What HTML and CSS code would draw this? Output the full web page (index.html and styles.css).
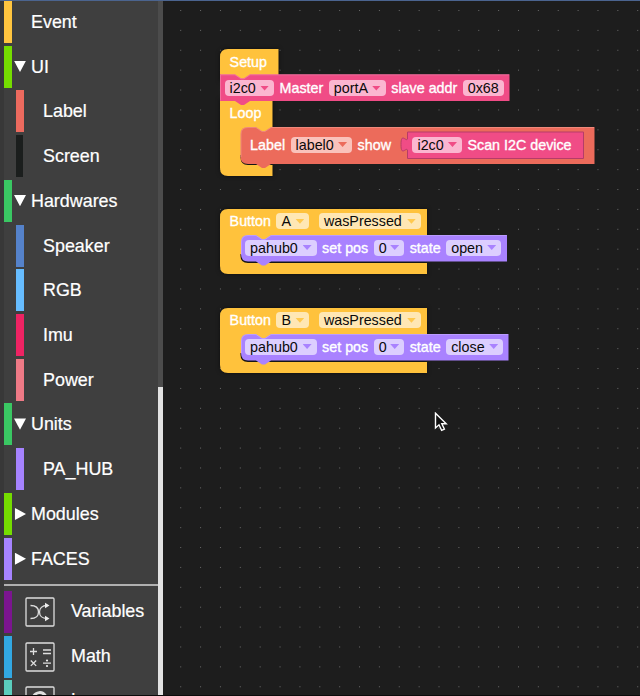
FILE: index.html
```
<!DOCTYPE html>
<html lang="en">
<head>
<meta charset="utf-8">
<title>Block editor</title>
<link rel="stylesheet" href="styles.css">
</head>
<body>
<div class="app">
  <aside class="toolbox">
    <nav class="tree">
      <div class="row"><i class="bar gold"></i><span class="name">Event</span></div>
      <div class="row"><i class="bar lime"></i><i class="arrow down"></i><span class="name">UI</span></div>
      <div class="row nested"><i class="bar coral"></i><span class="name">Label</span></div>
      <div class="row nested"><i class="bar black"></i><span class="name">Screen</span></div>
      <div class="row"><i class="bar green"></i><i class="arrow down"></i><span class="name">Hardwares</span></div>
      <div class="row nested"><i class="bar blue"></i><span class="name">Speaker</span></div>
      <div class="row nested"><i class="bar sky"></i><span class="name">RGB</span></div>
      <div class="row nested"><i class="bar crimson"></i><span class="name">Imu</span></div>
      <div class="row nested"><i class="bar rose"></i><span class="name">Power</span></div>
      <div class="row"><i class="bar green"></i><i class="arrow down"></i><span class="name">Units</span></div>
      <div class="row nested"><i class="bar violet"></i><span class="name">PA_HUB</span></div>
      <div class="row"><i class="bar lime"></i><i class="arrow right"></i><span class="name">Modules</span></div>
      <div class="row"><i class="bar violet"></i><i class="arrow right"></i><span class="name">FACES</span></div>
      <div class="separator"></div>
      <div class="row with-icon"><i class="bar purple"></i>
        <svg class="icon" viewBox="0 0 30 30"><rect x="1" y="1" width="28" height="28" rx="1"/><path d="M5.500 8.500C11 8.500 13.500 11.500 13.500 15S11 21.500 5.500 21.500M22 8.500C17 8.500 14.500 11.500 14.500 15S17 21.500 22 21.500"/><path class="solid" d="M20 5.800 24.500 8.500 20 11.200zM20 18.800l4.500 2.700-4.500 2.700z"/></svg>
        <span class="name">Variables</span></div>
      <div class="row with-icon"><i class="bar azure"></i>
        <svg class="icon" viewBox="0 0 30 30"><rect x="1" y="1" width="28" height="28" rx="1"/><path d="M5 9.500h7M8.500 6v7M18 8h8M18 11.500h8M5.800 18.500l5.400 5.400M11.200 18.500l-5.400 5.400M18 21.200h8"/><circle class="solid" cx="22" cy="18.500" r="1.100"/><circle class="solid" cx="22" cy="24" r="1.100"/></svg>
        <span class="name">Math</span></div>
      <div class="row with-icon"><i class="bar teal"></i>
        <svg class="icon" viewBox="0 0 30 30"><rect x="1" y="1" width="28" height="28" rx="1"/><path class="loop" d="M8 12C10 5.500 18 4.500 21 11"/><path class="solid" d="M14 10l9-1-2 8z"/></svg>
        <span class="name">Loops</span></div>
    </nav>
    <div class="scroll"><div class="thumb"></div></div>
  </aside>
  <main class="canvas">
    <svg class="dots"><defs><pattern id="dot" x="17.200" y="10" width="19.870" height="19.890" patternUnits="userSpaceOnUse"><rect width="1" height="1" fill="#696969"/></pattern></defs><rect width="100%" height="100%" fill="url(#dot)"/></svg>

    <section class="stack first">
      <svg class="shape" width="380" height="132">
        <path class="yellow" d="M0 32V8Q0 0 8 0H58.500V32z"/>
        <path class="yellow" d="M0 50.500H52.500V106H20.500V108Q20.500 116 28 116H52.500V127H8Q0 127 0 119z"/>
        <path class="pink" d="M0 25.300H15l6 4h3l6-4H289.500V52H30l-6 4h-3l-6-4H0z"/>
        <path class="edge" d="M.5 51.500V25.800H15l6 4h3l6-4H289"/>
        <path class="red" d="M20.500 85Q20.500 78 28 78H36l6 4h3l6-4H374.500V115H51l-6 4h-3l-6-4H28Q20.500 115 20.500 108z"/>
        <path class="edge" d="M21 108V85Q21 78.500 28 78.500H36l6 4h3l6-4H374"/>
        <path class="pink inset" d="M187.500 83H363.500V109.500H187.500V101C186 98 181 108 181 95.500S186 93 187.500 90z"/>
      </svg>
      <div class="line setup"><span class="word">Setup</span></div>
      <div class="line tight"><span class="pill p-pink w49">i2c0<i class="caret"></i></span><span class="word">Master</span><span class="pill p-pink w57">portA<i class="caret"></i></span><span class="word">slave addr</span><span class="pill p-pink w41">0x68</span></div>
      <div class="line loop-line"><span class="word">Loop</span></div>
      <div class="line inner tall"><span class="word">Label</span><span class="pill p-red w61">label0<i class="caret"></i></span><span class="word">show</span><span class="pill p-pink w49 value">i2c0<i class="caret"></i></span><span class="word">Scan I2C device</span></div>
    </section>

    <section class="stack second">
      <svg class="shape" width="300" height="72">
        <path class="yellow" d="M8 0H207V32H52V45H20.500V47Q20.500 54 28 54H207V65H8Q0 65 0 57V8Q0 0 8 0z"/>
        <path class="lilac" d="M21 33Q21 26 28 26H36l6 4h3l6-4H287V52.500H51l-6 4h-3l-6-4H28Q21 52.500 21 45z"/>
        <path class="edge" d="M21.500 45V33Q21.500 26.500 28 26.500H36l6 4h3l6-4H286.500"/>
      </svg>
      <div class="line"><span class="word">Button</span><span class="pill p-yellow w33">A<i class="caret"></i></span><span class="pill p-yellow w102 event">wasPressed<i class="caret"></i></span></div>
      <div class="line inner body"><span class="pill p-lilac w72">pahub0<i class="caret"></i></span><span class="word">set pos</span><span class="pill p-lilac w30">0<i class="caret"></i></span><span class="word">state</span><span class="pill p-lilac w55">open<i class="caret"></i></span></div>
    </section>

    <section class="stack third">
      <svg class="shape" width="300" height="72">
        <path class="yellow" d="M8 0H207V32H52V45H20.500V47Q20.500 54 28 54H207V65H8Q0 65 0 57V8Q0 0 8 0z"/>
        <path class="lilac" d="M21 33Q21 26 28 26H36l6 4h3l6-4H288.500V52.500H51l-6 4h-3l-6-4H28Q21 52.500 21 45z"/>
        <path class="edge" d="M21.500 45V33Q21.500 26.500 28 26.500H36l6 4h3l6-4H288"/>
      </svg>
      <div class="line"><span class="word">Button</span><span class="pill p-yellow w33">B<i class="caret"></i></span><span class="pill p-yellow w102 event">wasPressed<i class="caret"></i></span></div>
      <div class="line inner body"><span class="pill p-lilac w72">pahub0<i class="caret"></i></span><span class="word">set pos</span><span class="pill p-lilac w30">0<i class="caret"></i></span><span class="word">state</span><span class="pill p-lilac w57">close<i class="caret"></i></span></div>
    </section>

    <svg class="cursor" viewBox="0 0 14 20"><path d="M1.500 1.200V16L5 12.800l2.600 5.600 2.800-1.300-2.600-5.300h4.400z"/></svg>
  </main>
</div>
</body>
</html>
```
FILE: styles.css
```
* { box-sizing: border-box; }
body { margin: 0; background: #1d1d1d; font-family: "Liberation Sans", Arial, sans-serif; }
.app { display: flex; width: 640px; height: 696px; overflow: hidden; border-top: 1px solid #4b648f; border-bottom: 1px solid #0b0b0b; }

.toolbox { display: flex; width: 163px; background: #3f3f3f; }
.tree { width: 158px; height: 694px; overflow: hidden; padding-left: 4px; background: linear-gradient(90deg, #383838 4px, #3f3f3f 4px); }
.row { display: flex; height: 44.720px; }
.bar { width: 8px; height: 42px; flex: none; }
.nested { padding-left: 12px; }
.name { margin-left: 19px; height: 42px; line-height: 43px; font-size: 17.900px; color: #fff; -webkit-text-stroke: .2px #fff; white-space: nowrap; }
.arrow { width: 12px; height: 12px; margin: 15px -14px 0 2px; background: #fff; flex: none; }
.down { clip-path: polygon(0 0, 100% 0, 50% 95%); }
.right { clip-path: polygon(8% 0, 100% 50%, 8% 100%); }
.gold { background: #ffc53f; }
.lime { background: #75dd00; }
.coral { background: #ec6a5e; }
.black { background: #1b1e1d; width: 7px; margin-right: 1px; }
.green { background: #3ac763; }
.blue { background: #5582ca; }
.sky { background: #66bcff; }
.crimson { background: #ee2363; }
.rose { background: #ee7a86; }
.violet { background: #a683ff; }
.purple { background: #7b158f; }
.azure { background: #32a8e2; }
.teal { background: #5bcdbd; }
.separator { height: 2px; margin: 1.700px 0 5px; background: #b0b0b0; }
.icon { width: 30px; height: 30px; margin: 6px 0 0 13px; flex: none; fill: none; stroke: #dedede; stroke-width: 1.3; }
.icon .solid { fill: #eee; stroke: none; }
.icon .loop { stroke-width: 3; }
.with-icon .name { margin-left: 16px; line-height: 41.500px; }
.scroll { width: 5px; background: #4c4c4c; padding-top: 386px; }
.thumb { height: 310px; background: #e2e2e2; }

.canvas { position: relative; flex: 1; background: #1d1d1d; }
.dots { display: block; width: 100%; height: 100%; margin-top: -1px; }
.stack { position: absolute; left: 56.600px; font-size: 14.300px; color: #fff; }
.first { top: 48px; }
.second { top: 207.500px; }
.third { top: 306.500px; }
.shape { position: absolute; left: 0; top: 0; overflow: visible; }
.yellow { fill: #ffc23c; filter: drop-shadow(0 0 2px #0008); }
.pink { fill: #f04c86; }
.red { fill: #ec6b5b; }
.lilac { fill: #a982ff; }
.edge { fill: none; stroke: #fff; stroke-opacity: .2; }
.inset { stroke: #b63c68; stroke-width: 1; }
.line { position: relative; display: flex; align-items: center; gap: 5.500px; height: 25.500px; padding-left: 10px; white-space: nowrap; }
.word { -webkit-text-stroke: .35px #fff; }
.setup { height: 26px; }
.tight { height: 26px; padding-left: 5px; }
.loop-line { height: 24.500px; }
.inner { margin-left: 20.500px; padding-left: 10px; }
.tall { height: 38px; }
.body { height: 27px; padding-left: 5px; }
.pill { display: flex; align-items: center; justify-content: space-between; height: 16px; padding: 0 5px; border-radius: 4px; color: #0a0a0a; }
.caret { width: 9px; height: 5px; clip-path: polygon(0 0, 100% 0, 50% 100%); }
.p-pink { background: #fbb6d0; }
.p-pink .caret { background: #f04c86; }
.p-red { background: #fac2bb; }
.p-red .caret { background: #ec6b5b; }
.p-yellow { background: #ffe7b4; }
.p-yellow .caret { background: #ffc94f; }
.p-lilac { background: #dcceff; }
.p-lilac .caret { background: #a982ff; }
.w30 { width: 30.500px; }
.w33 { width: 33px; }
.w41 { width: 41px; }
.w49 { width: 49.500px; }
.w55 { width: 55px; }
.w57 { width: 57px; }
.w61 { width: 61.500px; }
.w72 { width: 71.500px; }
.w102 { width: 102px; }
.event { margin-left: 4px; }
.value { margin-left: 16px; }
.cursor { position: absolute; left: 271px; top: 411px; width: 14px; height: 20px; fill: #111; stroke: #fff; stroke-width: 1.4; }
```
